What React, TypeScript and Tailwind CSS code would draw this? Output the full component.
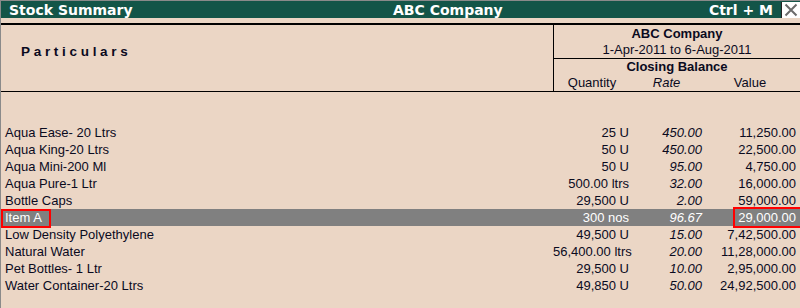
import React from "react";

const rows = [
  { name: "Aqua Ease- 20 Ltrs", qty: "25 U", rate: "450.00", value: "11,250.00" },
  { name: "Aqua King-20 Ltrs", qty: "50 U", rate: "450.00", value: "22,500.00" },
  { name: "Aqua Mini-200 Ml", qty: "50 U", rate: "95.00", value: "4,750.00" },
  { name: "Aqua Pure-1 Ltr", qty: "500.00 ltrs", rate: "32.00", value: "16,000.00" },
  { name: "Bottle Caps", qty: "29,500 U", rate: "2.00", value: "59,000.00" },
  { name: "Item A", qty: "300 nos", rate: "96.67", value: "29,000.00", active: true },
  { name: "Low Density Polyethylene", qty: "49,500 U", rate: "15.00", value: "7,42,500.00" },
  { name: "Natural Water", qty: "56,400.00 ltrs", rate: "20.00", value: "11,28,000.00" },
  { name: "Pet Bottles- 1 Ltr", qty: "29,500 U", rate: "10.00", value: "2,95,000.00" },
  { name: "Water Container-20 Ltrs", qty: "49,850 U", rate: "50.00", value: "24,92,500.00" },
];

const CloseIcon = () => (
  <svg width="14" height="14" viewBox="0 0 14 14">
    <path d="M1.5 1.5 L12.5 12.5 M12.5 1.5 L1.5 12.5" stroke="#6b6b6b" strokeWidth="2" />
  </svg>
);

export default function App() {
  return (
    <div className="w-[800px] h-[308px] overflow-hidden bg-[#ebd6c5] border-l border-t border-[#8a8a8a] font-['Liberation_Sans',Arial,sans-serif] text-[13px] text-[#0a0a1e]">
      {/* title bar */}
      <div className="h-[17px] bg-[#135548] flex items-center text-white font-['DejaVu_Sans',Verdana,sans-serif] font-bold text-[14px] leading-none">
        <span className="w-[392px] pl-[8px]">Stock Summary</span>
        <span>ABC Company</span>
        <span className="flex-1" />
        <span className="mr-[8px]">Ctrl + M</span>
        <div className="w-[19px] h-[16px] bg-white border-l border-[#222] flex items-center justify-center">
          <CloseIcon />
        </div>
      </div>
      <div className="h-[5px]" />
      <div className="h-[2px] bg-black" />

      {/* column header */}
      <div className="flex border-b border-black">
        <div className="flex-1 pl-[20px] pt-[17px] font-bold tracking-[3.7px] text-[13.5px]">
          Particulars
        </div>
        <div className="w-[247px] border-l border-black leading-[16px]">
          <div className="pt-[1px] text-center border-b border-black">
            <div className="font-bold">ABC Company</div>
            <div>1-Apr-2011 to 6-Aug-2011</div>
          </div>
          <div className="text-center font-bold">Closing Balance</div>
          <div className="flex">
            <div className="w-[76px] text-center">Quantity</div>
            <div className="w-[73px] text-center italic">Rate</div>
            <div className="w-[94px] text-center">Value</div>
          </div>
        </div>
      </div>

      {/* rows */}
      <div className="pt-[32px]">
        {rows.map((r, idx) => (
          <div
            key={idx}
            className={`relative flex h-[17px] items-center leading-[17px] whitespace-nowrap ${
              r.active ? "bg-[#808080] text-white" : ""
            }`}
          >
            <div className="flex-1 pl-[4px]">{r.name}</div>
            <div className="w-[76px] text-right">{r.qty}</div>
            <div className="w-[73px] text-right italic">{r.rate}</div>
            <div className="w-[94px] text-right">{r.value}</div>
            <div className="w-[4px]" />
            {r.active && (
              <>
                <div className="absolute left-0 top-0 w-[50px] h-[19px] border-2 border-[#f00]" />
                <div className="absolute left-[732px] top-[-2px] w-[70px] h-[21px] border-2 border-[#f00]" />
              </>
            )}
          </div>
        ))}
      </div>
    </div>
  );
}
